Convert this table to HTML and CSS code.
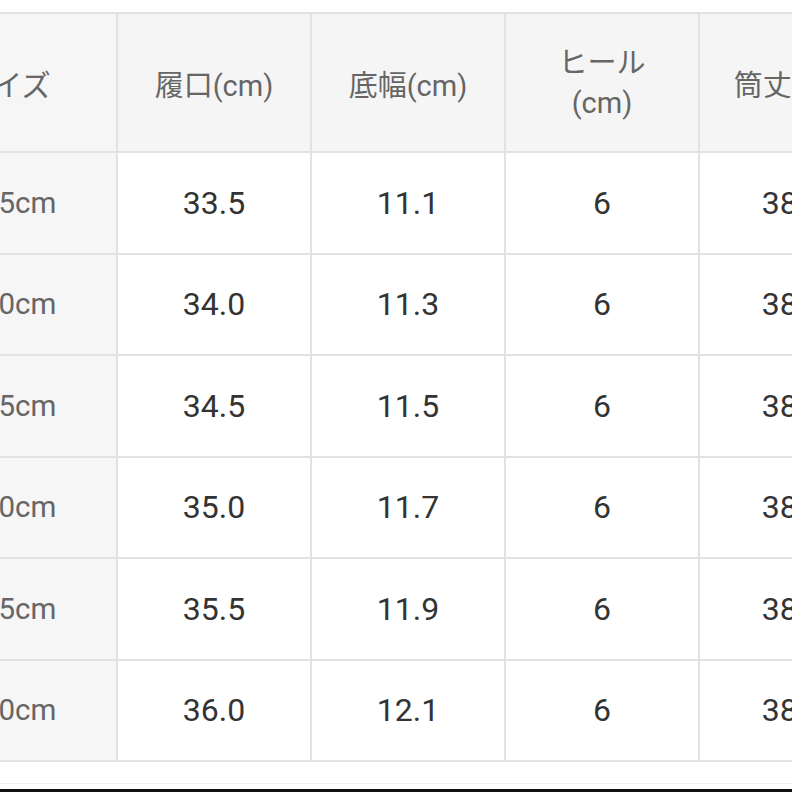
FILE: index.html
```html
<!DOCTYPE html>
<html lang="ja">
<head>
<meta charset="utf-8">
<link rel="stylesheet" href="styles.css">
</head>
<body>
<div class="page">
  <div class="size-table">
    <div class="cell head first">サイズ</div>
    <div class="cell head">履口(cm)</div>
    <div class="cell head">底幅(cm)</div>
    <div class="cell head two-line">ヒール<br>(cm)</div>
    <div class="cell head">筒丈(cm)</div>

    <div class="cell first">22.5cm</div>
    <div class="cell">33.5</div>
    <div class="cell">11.1</div>
    <div class="cell">6</div>
    <div class="cell">38.0</div>

    <div class="cell first">23.0cm</div>
    <div class="cell">34.0</div>
    <div class="cell">11.3</div>
    <div class="cell">6</div>
    <div class="cell">38.0</div>

    <div class="cell first">23.5cm</div>
    <div class="cell">34.5</div>
    <div class="cell">11.5</div>
    <div class="cell">6</div>
    <div class="cell">38.0</div>

    <div class="cell first">24.0cm</div>
    <div class="cell">35.0</div>
    <div class="cell">11.7</div>
    <div class="cell">6</div>
    <div class="cell">38.0</div>

    <div class="cell first">24.5cm</div>
    <div class="cell">35.5</div>
    <div class="cell">11.9</div>
    <div class="cell">6</div>
    <div class="cell">38.0</div>

    <div class="cell first">25.0cm</div>
    <div class="cell">36.0</div>
    <div class="cell">12.1</div>
    <div class="cell">6</div>
    <div class="cell">38.0</div>
  </div>
  <div class="divider"></div>
  <div class="bottom-bar"></div>
</div>
</body>
</html>
```
FILE: styles.css
```css
html, body {
  margin: 0;
  padding: 0;
  background: #ffffff;
  overflow: hidden;
  width: 792px;
  height: 792px;
}

.page {
  width: 792px;
  height: 792px;
  overflow: hidden;
  font-family: "Roboto", "Noto Sans CJK JP", sans-serif;
  padding-top: 12px;
  box-sizing: border-box;
}

.size-table {
  display: grid;
  grid-template-columns: 218px 192px 192px 192px 186px;
  grid-template-rows: 137px repeat(6, 99.5px);
  gap: 2px;
  padding: 2px;
  background: #e2e2e2;
  margin-left: -104px;
  width: max-content;
}

.cell {
  background: #ffffff;
  display: flex;
  align-items: center;
  justify-content: center;
  text-align: center;
  font-size: 32px;
  color: #333333;
  white-space: nowrap;
}

.cell.head {
  background: #f5f5f5;
  color: #666666;
  font-size: 29px;
}

.cell.two-line {
  line-height: 40px;
}

.cell.first {
  background: #f6f6f6;
  color: #666666;
  font-size: 29.5px;
}

.divider {
  margin-top: 21px;
  height: 1px;
  background: #eeeeee;
}

.bottom-bar {
  margin-top: 5px;
  height: 4px;
  background: #111111;
}
```
